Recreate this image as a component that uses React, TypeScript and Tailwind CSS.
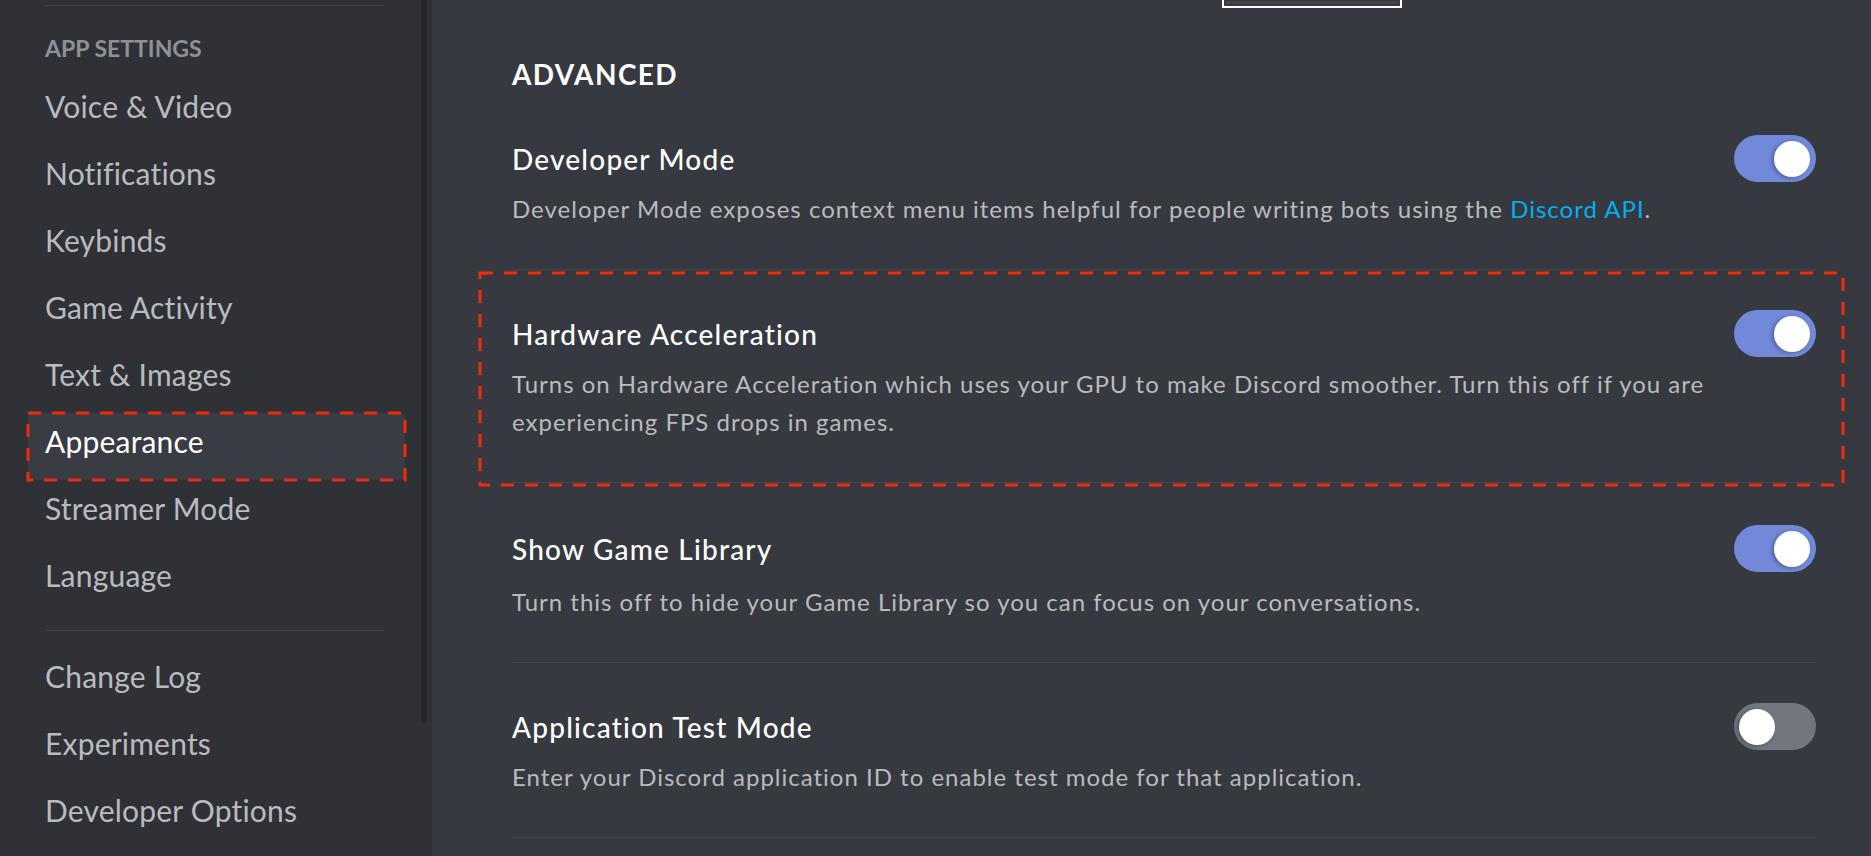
import React from 'react';

const topItems = ['Voice & Video', 'Notifications', 'Keybinds', 'Game Activity', 'Text & Images', 'Appearance', 'Streamer Mode', 'Language'];
const bottomItems = ['Change Log', 'Experiments', 'Developer Options'];

// red dashed annotation frame drawn over content
const DashedFrame = ({ className }: { className: string }) => (
  <svg className={`pointer-events-none absolute overflow-visible ${className}`}>
    <rect x="0" y="0" width="100%" height="100%" fill="none" stroke="#f52a0c" strokeWidth="3" strokeDasharray="13 11" />
  </svg>
);

const Toggle = ({ on }: { on: boolean }) => (
  <div
    className={`flex h-[47px] w-[82px] shrink-0 items-center rounded-full px-[6px] ${on ? 'justify-end bg-[#7289da]' : 'justify-start bg-[#72767d] pl-[5px]'}`}
  >
    <div className="h-[36px] w-[36px] rounded-full bg-white shadow-[-2px_1px_4px_rgba(0,0,0,0.3)]" />
  </div>
);

const NavItem = ({ label, active }: { label: string; active?: boolean }) => (
  <div
    className={`relative h-[67px] w-[377px] rounded-md px-[17px] pt-[10px] text-[30px] leading-[36px] tracking-[0.2px] ${active ? 'bg-[#393c43] text-white' : 'text-[#b9bbbe]'}`}
  >
    {label}
    {active && <DashedFrame className="inset-0 h-full w-full" />}
  </div>
);

type SectionProps = {
  title: string;
  on: boolean;
  loose?: boolean;
  children: React.ReactNode;
};

const Section = ({ title, on, loose, children }: SectionProps) => (
  <section className={`relative border-b border-[#42454a] pb-[41px] ${loose ? 'pt-[42px]' : 'pt-10'}`}>
    <div className="flex h-[47px] items-center justify-between">
      <h3 className="text-[28px] font-medium tracking-[1.2px] text-white">{title}</h3>
      <Toggle on={on} />
    </div>
    <p className={`${loose ? 'mt-[11px]' : 'mt-2'} text-[24px] leading-[38px] tracking-[1px] text-[#b9bbbe]`}>{children}</p>
  </section>
);

export default function App() {
  return (
    <div className="relative flex h-[856px] w-full overflow-hidden bg-[#36393f] font-[Lato,sans-serif]">
      {/* Sidebar */}
      <aside className="flex w-[432px] shrink-0 bg-[#2f3136]">
        <nav className="w-[421px] pl-[28px] pt-[5px]">
          <div className="ml-[17px] h-px w-[339px] bg-[#3d4046]" />
          <div className="mb-[15px] ml-[17px] mt-[27px] text-[23px] font-bold uppercase leading-[30px] text-[#8e9297]">
            App Settings
          </div>
          {topItems.map((item) => (
            <NavItem key={item} label={item} active={item === 'Appearance'} />
          ))}
          <div className="mb-[17px] ml-[17px] mt-[16px] h-px w-[339px] bg-[#3d4046]" />
          {bottomItems.map((item) => (
            <NavItem key={item} label={item} />
          ))}
        </nav>
        <div className="w-[11px]">
          <div className="h-[723px] w-[6px] rounded-b-full bg-[#25272b]" />
        </div>
      </aside>

      {/* Content */}
      <main className="flex-1 pl-[80px] pr-[55px] pt-[58px]">
        <h2 className="mb-[5px] text-[28px] font-bold uppercase leading-[32px] tracking-[1.4px] text-white">Advanced</h2>

        <Section title="Developer Mode" on>
          Developer Mode exposes context menu items helpful for people writing bots using the{' '}
          <span className="text-[#00b0f4]">Discord API</span>.
        </Section>

        <div className="relative">
          <Section title="Hardware Acceleration" on>
            Turns on Hardware Acceleration which uses your GPU to make Discord smoother. Turn this off if you are
            experiencing FPS drops in games.
          </Section>
          <DashedFrame className="-left-[32px] top-[3px] h-[212px] w-[1363px]" />
        </div>

        <Section title="Show Game Library" on loose>
          Turn this off to hide your Game Library so you can focus on your conversations.
        </Section>

        <Section title="Application Test Mode" on={false}>
          Enter your Discord application ID to enable test mode for that application.
        </Section>
      </main>

      {/* cropped popup edge at the top */}
      <div className="absolute left-[1222px] top-0 h-[8px] w-[180px] border-2 border-t-0 border-white bg-[#3a3c41]">
        <div className="mx-[3px] mt-[2px] border-b border-dotted border-[#5d6066]" />
      </div>
    </div>
  );
}
